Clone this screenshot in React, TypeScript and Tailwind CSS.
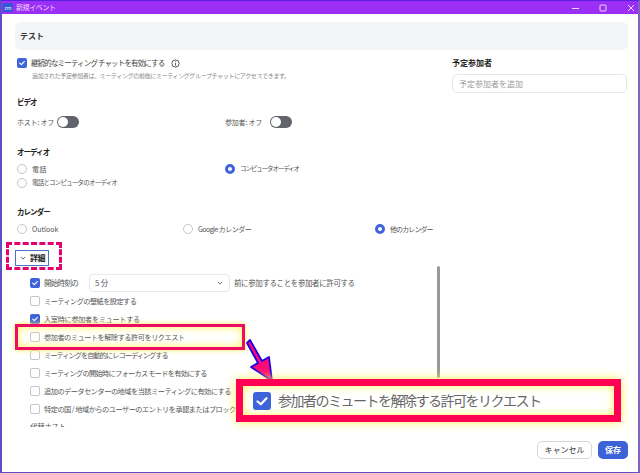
import React from "react";

function Check({ on = false }: { on?: boolean }) {
  return on ? (
    <span className="flex h-[10px] w-[10px] shrink-0 items-center justify-center rounded-[2px] bg-[#3f63d8]">
      <svg viewBox="0 0 10 10" className="h-[8px] w-[8px]" fill="none" stroke="#fff" strokeWidth="1.5" strokeLinecap="round" strokeLinejoin="round">
        <path d="M2.2 5.2 4.2 7 7.8 3.2" />
      </svg>
    </span>
  ) : (
    <span className="h-[10px] w-[10px] shrink-0 rounded-[2px] border border-[#c4c6cc] bg-white" />
  );
}

function Radio({ on = false }: { on?: boolean }) {
  return on ? (
    <span className="h-[10px] w-[10px] shrink-0 rounded-full border-[3px] border-[#3f63d8] bg-white" />
  ) : (
    <span className="h-[10px] w-[10px] shrink-0 rounded-full border border-[#c4c6cc] bg-white" />
  );
}

function Toggle() {
  return (
    <span className="flex h-[12px] w-[22px] shrink-0 items-center rounded-full bg-[#62646b] pl-[1px]">
      <span className="h-[10px] w-[10px] rounded-full bg-white" />
    </span>
  );
}

function Heading({ className, children }: { className: string; children: React.ReactNode }) {
  return <div className={`flex h-[12px] items-center text-[7.5px] font-bold tracking-[-0.95px] text-[#222] ${className}`}>{children}</div>;
}

function Opt({ label, on, className = "", textClass }: { label: string; on?: boolean; className?: string; textClass: string }) {
  return (
    <div className={`flex items-center gap-[5px] ${className}`}>
      <Radio on={on} />
      <span className={`whitespace-nowrap text-[#555] ${textClass}`}>{label}</span>
    </div>
  );
}

function Row({ on, textClass, children }: { on?: boolean; textClass: string; children: React.ReactNode }) {
  return (
    <div className="flex h-[18px] items-center gap-[4px] whitespace-nowrap text-[7.2px] text-[#555]">
      <Check on={on} />
      <span className={textClass}>{children}</span>
    </div>
  );
}

export default function App() {
  return (
    <div className="relative flex h-[473px] w-[640px] flex-col overflow-hidden border-b border-l-2 border-r-2 border-t border-b-[#5b50c8] border-l-[#5b50c8] border-r-[#7d62c4] border-t-[#5a1fe0] bg-white font-['Noto_Sans_CJK_JP','Liberation_Sans',sans-serif]">
      <div className="flex h-[13px] shrink-0 items-center bg-[#9b2ff5] pl-[1px] text-white">
        <span className="flex h-[9px] w-[10px] items-center justify-center rounded-[2px] bg-[#2d5bd8] text-[5px] leading-none">zm</span>
        <span className="ml-[3px] text-[7px] tracking-[-0.4px] text-[#f1dcff]">新規イベント</span>
        <div className="ml-auto flex items-center text-[#f1dcff]">
          <svg viewBox="0 0 8 8" className="h-[8px] w-[8px]" stroke="currentColor" fill="none"><path d="M0 4.5h7" /></svg>
          <svg viewBox="0 0 8 8" className="ml-[19px] h-[8px] w-[8px]" stroke="currentColor" fill="none"><rect x="1" y="1" width="6" height="6" rx="1" /></svg>
          <svg viewBox="0 0 8 8" className="ml-[20px] mr-[3px] h-[8px] w-[8px]" stroke="currentColor" fill="none"><path d="M1 1l6 6M7 1 1 7" /></svg>
        </div>
      </div>

      <div className="min-h-0 flex-1 overflow-hidden pl-[13px] pr-[10px]">
        <div className="mt-[8px] flex h-[28px] items-center rounded-[6px] bg-[#f3f5f6] pl-[5px] text-[8px] font-bold text-[#333]">テスト</div>

        <div className="mt-[6px] flex">
          <div className="w-[435px] pl-[2px]">
            <div className="flex h-[14px] items-center gap-[4px] text-[7.5px] tracking-[-0.85px] text-[#444]">
              <Check on />
              <span>継続的なミーティング チャットを有効にする</span>
              <svg viewBox="0 0 10 10" className="ml-[3px] h-[9px] w-[9px]" fill="none" stroke="#333" strokeWidth="0.9">
                <circle cx="5" cy="5" r="4" />
                <path d="M5 4.4v3M5 2.6v.9" />
              </svg>
            </div>
            <div className="flex h-[10px] items-center whitespace-nowrap pl-[15px] text-[6px] tracking-[-0.35px] text-[#888]">
              追加された予定参加者は、ミーティングの前後にミーティンググループチャットにアクセスできます。
            </div>

            <Heading className="mt-[16px]">ビデオ</Heading>
            <div className="mt-[8px] flex h-[12px] items-center text-[7px] tracking-[-0.2px] text-[#555]">
              <div className="flex w-[208px] items-center gap-[5px]">
                <span className="w-[35px] whitespace-nowrap">ホスト: オフ</span>
                <Toggle />
              </div>
              <div className="flex items-center gap-[5px]">
                <span className="w-[40px] whitespace-nowrap">参加者: オフ</span>
                <Toggle />
              </div>
            </div>

            <Heading className="mt-[18px]">オーディオ</Heading>
            <div className="mt-[5px] flex h-[12px] items-center">
              <Opt label="電話" className="w-[208px]" textClass="text-[7px] tracking-[0.5px]" />
              <Opt label="コンピュータオーディオ" on className="gap-[4px]" textClass="text-[6.5px] tracking-[-1.1px]" />
            </div>
            <div className="mt-[2px] flex h-[12px] items-center">
              <Opt label="電話とコンピュータのオーディオ" textClass="text-[6.5px] tracking-[-0.8px]" />
            </div>

            <Heading className="mt-[17px]">カレンダー</Heading>
            <div className="mt-[5px] flex h-[12px] items-center">
              <Opt label="Outlook" className="w-[166px]" textClass="text-[7px]" />
              <Opt label="Google カレンダー" className="w-[192px]" textClass="text-[7px] tracking-[-0.55px]" />
              <Opt label="他のカレンダー" on textClass="text-[7px] tracking-[-0.9px]" />
            </div>
          </div>
          <div className="ml-[2px] w-[175px]">
            <div className="flex h-[14px] items-center text-[8px] font-bold text-[#222]">予定参加者</div>
            <div className="mt-[4px] flex h-[19px] items-center rounded-[5px] border border-[#e5e7eb] pl-[6px] text-[8px] text-[#999]">予定参加者を追加</div>
          </div>
        </div>

        <div className="mt-[15px] flex h-[16px] w-[34px] items-center gap-[4px] border border-[#4b74c9] pl-[4px] text-[8px] font-bold text-[#222]">
          <svg viewBox="0 0 8 8" className="h-[6px] w-[6px]" fill="none" stroke="#333" strokeWidth="1"><path d="M1 2.5 4 5.5 7 2.5" /></svg>
          <span className="tracking-[-0.5px]">詳細</span>
        </div>

        <div className="flex">
          <div className="mt-[8px] w-[422px] pl-[15px]">
            <div className="flex h-[18px] items-center whitespace-nowrap text-[7.5px] text-[#555]">
              <Check on />
              <span className="ml-[4px] w-[45px] tracking-[-0.7px]">開始時刻の</span>
              <div className="flex h-[18px] w-[141px] items-center justify-between rounded-[4px] border border-[#e8e9ec] pl-[5px] pr-[6px]">
                <span>5 分</span>
                <svg viewBox="0 0 8 8" className="h-[6px] w-[6px]" fill="none" stroke="#444" strokeWidth="1"><path d="M1 2.5 4 5.5 7 2.5" /></svg>
              </div>
              <span className="ml-[4px] tracking-[-0.4px]">前に参加することを参加者に許可する</span>
            </div>
            <Row textClass="tracking-[-0.56px]">ミーティングの壁紙を設定する</Row>
            <Row on textClass="tracking-[-0.34px]">入室時に参加者をミュートする</Row>
            <Row textClass="tracking-[-0.49px]">参加者のミュートを解除する許可をリクエスト</Row>
            <Row textClass="tracking-[-0.95px]">ミーティングを自動的にレコーディングする</Row>
            <Row textClass="tracking-[-0.7px]">ミーティングの開始時にフォーカス モードを有効にする</Row>
            <Row textClass="tracking-[-0.5px]">追加のデータセンターの地域を当該ミーティングに有効にする</Row>
            <Row textClass="tracking-[-0.5px]">特定の国 / 地域からのユーザーのエントリを承認またはブロックする</Row>
            <div className="flex h-[18px] items-center text-[7.5px] tracking-[-0.3px] text-[#555]">代替ホスト</div>
          </div>
          <div className="h-[112px] w-[3px] shrink-0 rounded-full bg-[#9a9a9a]" />
        </div>
      </div>

      <div className="flex h-[45px] shrink-0 items-start justify-end gap-[6px] pr-[10px] pt-[14px]">
        <div className="flex h-[18px] w-[55px] items-center justify-center rounded-[5px] border border-[#d4d6da] text-[8px] text-[#333]">キャンセル</div>
        <div className="flex h-[18px] w-[30px] items-center justify-center rounded-[5px] bg-[#3b62d6] text-[8px] font-bold text-white">保存</div>
      </div>

      {/* Annotation overlays */}
      <div className="absolute left-[4px] top-[241px] h-[28px] w-[56px] border-[3px] border-dashed border-[#e6006e]" />
      <div className="absolute left-[13px] top-[323px] h-[26px] w-[230px] border-[3px] border-[#ef0a62] shadow-[inset_0_0_8px_#ffee55,0_0_5px_#ffee55]" />
      <svg className="absolute left-[0px] top-[0px] h-[473px] w-[640px] -translate-x-[2px] -translate-y-[1px]" viewBox="0 0 640 473">
        <polygon points="247,343 250,340 262,361 269,357 272,381 251,367 258,363" fill="#ff0a78" stroke="#1a00e0" strokeWidth="1.8" strokeLinejoin="round" />
      </svg>
      <div className="absolute left-[234px] top-[378px] flex h-[43px] w-[385px] items-center border-[7px] border-[#ff0055] bg-white pl-[10px] shadow-[inset_0_0_9px_#ffee55,0_0_10px_#ffee55]">
        <span className="flex h-[18px] w-[18px] shrink-0 items-center justify-center rounded-[3px] bg-[#3f63d8]">
          <svg viewBox="0 0 18 18" className="h-[18px] w-[18px]" fill="none" stroke="#fff" strokeWidth="2.2" strokeLinecap="round" strokeLinejoin="round">
            <path d="M4.5 9.5 7.8 12.2 13.5 6.2" />
          </svg>
        </span>
        <span className="ml-[7px] whitespace-nowrap text-[14px] tracking-[-1.5px] text-[#666]">参加者のミュートを解除する許可をリクエスト</span>
      </div>
    </div>
  );
}
